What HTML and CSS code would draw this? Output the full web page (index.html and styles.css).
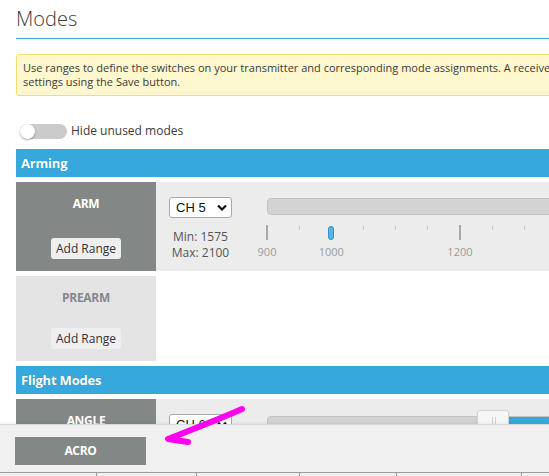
FILE: index.html
```html
<!DOCTYPE html>
<html>
<head>
    <meta charset="UTF-8">
    <meta name="viewport" content="width=device-width">
    <title>Modes</title>
    <link rel="stylesheet" href="styles.css">
</head>
<body>
<div class="tab">
    <h1 class="tab-title">Modes</h1>
    <div class="note">Use ranges to define the switches on your transmitter and corresponding mode assignments. A receiver channel that gives a reading between a range min/max will activate the mode. Remember to save your<br>settings using the Save button.</div>

    <div class="toggle-row">
        <span class="switch"><span class="knob"></span></span>
        <span>Hide unused modes</span>
    </div>

    <!-- arming group -->
    <div class="group-head">Arming</div>
    <div class="mode">
        <div class="mode-name">
            <span class="name">ARM</span>
            <button class="add-range">Add Range</button>
        </div>
        <div class="ranges">
            <div class="channel">
                <div class="select">CH 5 <svg width="10" height="7" viewBox="0 0 10 7"><path d="M1 1.5 L5 5.5 L9 1.5" fill="none" stroke="#111" stroke-width="2.2"/></svg></div>
                <div class="limits">Min: 1575<br>Max: 2100</div>
            </div>
            <div class="slider">
                <div class="track">
                    <div class="lower" style="width: 433px"></div>
                    <div class="handle"></div>
                    <div class="connect"></div>
                </div>
                <div class="pips">
                    <div class="pip"><i class="tick major"></i><span class="pip-label">900</span></div>
                    <div class="pip"><i class="tick"></i></div>
                    <div class="pip"><i class="marker"></i><span class="pip-label">1000</span></div>
                    <div class="pip"><i class="tick"></i></div>
                    <div class="pip"><i class="tick"></i></div>
                    <div class="pip"><i class="tick"></i></div>
                    <div class="pip"><i class="tick major"></i><span class="pip-label">1200</span></div>
                    <div class="pip"><i class="tick"></i></div>
                    <div class="pip"><i class="tick"></i></div>
                    <div class="pip"><i class="tick"></i></div>
                    <div class="pip"><i class="tick major"></i><span class="pip-label">1400</span></div>
                    <div class="pip"><i class="tick"></i></div>
                    <div class="pip"><i class="tick major"></i><span class="pip-label">1500</span></div>
                    <div class="pip"><i class="tick"></i></div>
                    <div class="pip"><i class="tick major"></i><span class="pip-label">1600</span></div>
                    <div class="pip"><i class="tick"></i></div>
                    <div class="pip"><i class="tick"></i></div>
                    <div class="pip"><i class="tick"></i></div>
                    <div class="pip"><i class="tick major"></i><span class="pip-label">1800</span></div>
                    <div class="pip"><i class="tick"></i></div>
                    <div class="pip"><i class="tick"></i></div>
                    <div class="pip"><i class="tick"></i></div>
                    <div class="pip"><i class="tick major"></i><span class="pip-label">2000</span></div>
                    <div class="pip"><i class="tick"></i></div>
                    <div class="pip"><i class="tick major"></i><span class="pip-label">2100</span></div>
                </div>
            </div>
        </div>
    </div>
    <div class="mode unused">
        <div class="mode-name">
            <span class="name">PREARM</span>
            <button class="add-range">Add Range</button>
        </div>
        <div class="ranges empty"></div>
    </div>

    <!-- flight modes group -->
    <div class="group-head">Flight Modes</div>
    <div class="mode">
        <div class="mode-name">
            <span class="name">ANGLE</span>
            <button class="add-range">Add Range</button>
        </div>
        <div class="ranges">
            <div class="channel">
                <div class="select">CH 6 <svg width="10" height="7" viewBox="0 0 10 7"><path d="M1 1.5 L5 5.5 L9 1.5" fill="none" stroke="#111" stroke-width="2.2"/></svg></div>
                <div class="limits">Min: 1250<br>Max: 2100</div>
            </div>
            <div class="slider angle">
                <div class="track">
                    <div class="lower" style="width: 209px"></div>
                    <div class="handle"></div>
                    <div class="connect"></div>
                </div>
            </div>
        </div>
    </div>
</div>

<!-- dragged mode and status bar along the bottom -->
<div class="dock">
    <div class="drag-mode">ACRO</div>
    <div class="status">
        <span style="width: 97px"></span>
        <span style="width: 100px"></span>
        <span style="width: 103px"></span>
        <span style="width: 97px"></span>
        <span style="width: 125px"></span>
        <span></span>
    </div>
</div>

<svg class="pointer" width="549" height="476" viewBox="0 0 549 476">
    <path d="M242 409 C222 418 196 428 168 439 L188 442" fill="none" stroke="#ff00f0" stroke-width="6" stroke-linecap="round" stroke-linejoin="round"/>
</svg>
</body>
</html>
```

FILE: styles.css
```css
/* Modes tab */

body {
    margin: 0;
    padding: 0;
    background: #fff;
    overflow: hidden;
    height: 476px;
    font-family: "Open Sans", "Noto Sans", sans-serif;
    color: #333;
}

.tab {
    width: 1100px;
    padding-left: 16px;
}

.tab-title {
    margin: 2px 0 0;
    padding-bottom: 2px;
    font-size: 20px;
    font-weight: 300;
    line-height: 34px;
    color: #3c3c3c;
    border-bottom: 1px solid #37a8db;
}

.note {
    margin-top: 15px;
    padding: 6px 6px;
    font-size: 11px;
    line-height: 14px;
    white-space: nowrap;
    color: #3a3a3a;
    background: #fff8cf;
    border: 1px solid #f3dc70;
    border-radius: 3px;
}

/* switch */

.toggle-row {
    display: flex;
    align-items: center;
    gap: 4px;
    margin-top: 27px;
    margin-left: 4px;
    height: 16px;
    font-size: 12px;
    line-height: 16px;
    color: #3a3a3a;
}

.switch {
    display: flex;
    align-items: center;
    width: 47px;
    height: 15px;
    border-radius: 8px;
    background: #cbcbcb;
}

.knob {
    width: 15px;
    height: 15px;
    border-radius: 50%;
    background: #fff;
    box-shadow: 0 1px 2px rgba(0,0,0,0.35);
}

/* groups and modes */

.group-head {
    margin-top: 10px;
    height: 28px;
    padding-left: 5px;
    background: #37a8db;
    color: #fff;
    font-size: 13px;
    font-weight: 700;
    line-height: 28px;
    letter-spacing: -0.2px;
    text-shadow: 0 0 1px rgba(0,0,0,0.25);
}

.mode + .group-head {
    margin-top: 5px;
}

.mode {
    display: flex;
    margin-top: 5px;
}

.mode-name {
    display: flex;
    flex-direction: column;
    align-items: center;
    justify-content: space-between;
    flex-shrink: 0;
    width: 140px;
    min-height: 85px;
    box-sizing: border-box;
    padding: 14px 0 12px;
    background: #838785;
}

.name {
    font-size: 12px;
    font-weight: 700;
    line-height: 16px;
    letter-spacing: -0.3px;
    color: #fff;
}

.unused .mode-name {
    background: #e4e4e4;
}

.unused .name {
    color: #84878c;
}

.add-range {
    height: 21px;
    padding: 0 5px;
    border: none;
    border-radius: 3px;
    background: #efefef;
    font-family: "Open Sans", "Noto Sans", sans-serif;
    font-size: 12px;
    white-space: nowrap;
    color: #333;
}

.ranges {
    flex: 1;
    display: flex;
    padding: 15px 0 10px 13px;
    background: #ececec;
}

.ranges.empty {
    background: #fff;
}

.channel {
    width: 63px;
    flex-shrink: 0;
}

.select {
    display: flex;
    align-items: center;
    justify-content: space-between;
    box-sizing: border-box;
    height: 21px;
    padding: 0 4px 0 6px;
    background: #fff;
    border: 1px solid #a9a9a9;
    border-radius: 3px;
    font-family: "Liberation Sans", Arial, sans-serif;
    font-size: 13px;
    color: #111;
}

.limits {
    margin-top: 11px;
    font-size: 12px;
    line-height: 16px;
    text-align: center;
    white-space: nowrap;
    color: #555;
}

/* range slider */

.slider {
    flex-shrink: 0;
    width: 772px;
    margin-left: 35px;
    padding-top: 1px;
}

.slider.angle {
    padding-top: 2px;
}

.track {
    display: flex;
    align-items: center;
    box-sizing: border-box;
    height: 17px;
    background: #d3d3d3;
    border: 1px solid #c2c2c2;
    border-radius: 4px;
}

.lower {
    align-self: stretch;
}

.handle {
    flex-shrink: 0;
    position: relative;
    box-sizing: border-box;
    width: 32px;
    height: 30px;
    background: #f7f7f7;
    border: 1px solid #d4d4d4;
    border-radius: 3px;
    box-shadow: 0 1px 2px rgba(0,0,0,0.08);
}

.handle::after {
    content: "";
    position: absolute;
    left: 14px;
    top: 6px;
    width: 2px;
    height: 10px;
    border-left: 1px solid #d0d0d0;
    border-right: 1px solid #d0d0d0;
}

.connect {
    flex: 1;
    align-self: stretch;
    background: #37a8db;
}

.pips {
    display: flex;
    justify-content: space-between;
    align-items: flex-start;
    margin-top: 10px;
}

.pip {
    display: flex;
    flex-direction: column;
    align-items: center;
    width: 0;
    min-width: 0;
    flex-shrink: 0;
}

.tick {
    display: block;
    width: 1px;
    height: 5px;
    background: #cdcdcd;
}

.tick.major {
    width: 2px;
    height: 15px;
    background: #a8a8a8;
}

.marker {
    display: block;
    box-sizing: border-box;
    width: 6px;
    height: 14px;
    margin-top: 1px;
    background: #5ab4e0;
    border: 1px solid #2e8fc4;
    border-radius: 3px;
}

.pip-label {
    margin-top: 4px;
    font-size: 11px;
    line-height: 16px;
    color: #9a9a9a;
    white-space: nowrap;
}

/* bottom dock */

.dock {
    position: fixed;
    left: 0;
    right: 0;
    bottom: 0;
    height: 52px;
    box-sizing: border-box;
    display: flex;
    flex-direction: column;
    justify-content: space-between;
    padding-top: 12px;
    background: #f0f0f0;
    border-top: 1px solid #d9d9d9;
    box-shadow: 0 -1px 3px rgba(0,0,0,0.06);
}

.drag-mode {
    width: 131px;
    height: 28px;
    margin-left: 15px;
    background: #838785;
    color: #fff;
    font-size: 12px;
    font-weight: 700;
    line-height: 28px;
    letter-spacing: -0.3px;
    text-align: center;
}

.status {
    display: flex;
    height: 3px;
    border-top: 1px solid #9c9c9c;
}

.status span {
    height: 3px;
    border-right: 1px solid #9c9c9c;
    box-sizing: border-box;
}

.status span:last-child {
    flex: 1;
    border-right: none;
}

.pointer {
    position: fixed;
    left: 0;
    top: 0;
    pointer-events: none;
}
```
